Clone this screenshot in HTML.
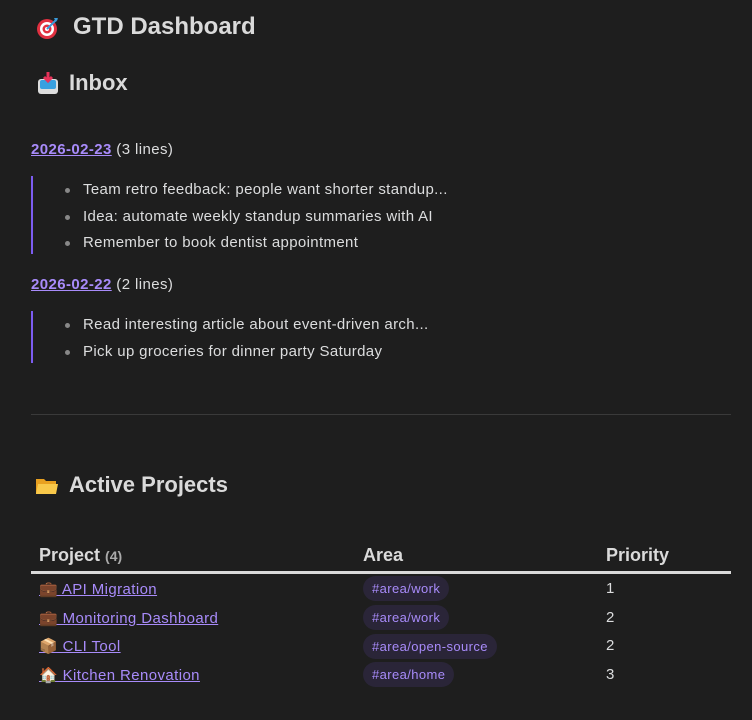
<!DOCTYPE html>
<html><head><meta charset="utf-8"><style>
body{margin:0;background:#1e1e1e;width:752px;height:720px;position:relative;font-family:"Liberation Sans",sans-serif;color:#dcddde;overflow:hidden}
.a{position:absolute;white-space:nowrap}
.t{font-weight:bold;color:#dadada}
a{color:#a88bfa;text-decoration:underline}
.q{border-left:2px solid #7c5cf0;position:absolute;left:31px}
.li{position:absolute;left:83px;font-size:15px;line-height:18px;letter-spacing:0.35px}
.li:before{content:"";position:absolute;left:-18px;top:7px;width:5px;height:5px;border-radius:50%;background:#888}
.tag{position:absolute;left:363px;background:#2a2538;color:#a88bfa;font-size:13px;padding:0 9px;height:25px;line-height:25px;border-radius:13px;letter-spacing:0.4px}
.r{font-size:15px;letter-spacing:0.4px}
</style></head><body>
<svg class="a" style="left:36px;top:16px" width="24" height="24" viewBox="0 0 24 24"><circle cx="11" cy="13" r="10" fill="#e03040"/><circle cx="11" cy="13" r="7" fill="#fff"/><circle cx="11" cy="13" r="4.5" fill="#e03040"/><circle cx="11" cy="13" r="2" fill="#fff"/><path d="M11 13L21 3" stroke="#3a9ad9" stroke-width="2"/><path d="M18 2l4 0-2 4z" fill="#3a9ad9"/></svg>
<div class="a t" style="left:73px;top:13px;font-size:24px">GTD Dashboard</div>
<svg class="a" style="left:37px;top:71px" width="22" height="24" viewBox="0 0 22 24"><rect x="1" y="8" width="20" height="15" rx="3" fill="#ddd"/><rect x="3" y="9" width="16" height="9" rx="2" fill="#39a0e0"/><path d="M11 1v8M7 6l4 4 4-4" stroke="#e8335a" stroke-width="3" fill="none"/></svg>
<div class="a t" style="left:69px;top:70px;font-size:22px">Inbox</div>
<div class="a" style="left:31px;top:141px;font-size:15px;letter-spacing:0.4px"><a style="font-weight:bold">2026-02-23</a> (3 lines)</div>
<div class="q" style="top:176px;height:78px"></div>
<div class="li" style="top:181px">Team retro feedback: people want shorter standup...</div>
<div class="li" style="top:208px">Idea: automate weekly standup summaries with AI</div>
<div class="li" style="top:234px">Remember to book dentist appointment</div>
<div class="a" style="left:31px;top:276px;font-size:15px;letter-spacing:0.4px"><a style="font-weight:bold">2026-02-22</a> (2 lines)</div>
<div class="q" style="top:311px;height:52px"></div>
<div class="li" style="top:316px">Read interesting article about event-driven arch...</div>
<div class="li" style="top:343px">Pick up groceries for dinner party Saturday</div>
<div class="a" style="left:31px;top:414px;width:700px;height:1px;background:#3a3a3a"></div>
<svg class="a" style="left:35px;top:476px" width="24" height="20" viewBox="0 0 24 20"><path d="M1 3h8l2 2h10v13H1z" fill="#e8a020"/><path d="M3 8h20l-2 10H1z" fill="#f8c84a"/></svg>
<div class="a t" style="left:69px;top:472px;font-size:22px">Active Projects</div>
<div class="a t" style="left:39px;top:545px;font-size:18px">Project <span style="font-size:14px;color:#aaa">(4)</span></div>
<div class="a t" style="left:363px;top:545px;font-size:18px">Area</div>
<div class="a t" style="left:606px;top:545px;font-size:18px">Priority</div>
<div class="a" style="left:31px;top:571px;width:700px;height:3px;background:#dadada"></div>
<div class="a r" style="left:39px;top:580px"><a>💼 API Migration</a></div>
<div class="a r" style="left:39px;top:609px"><a>💼 Monitoring Dashboard</a></div>
<div class="a r" style="left:39px;top:637px"><a>📦 CLI Tool</a></div>
<div class="a r" style="left:39px;top:666px"><a>🏠 Kitchen Renovation</a></div>
<div class="tag" style="top:576px">#area/work</div>
<div class="tag" style="top:605px">#area/work</div>
<div class="tag" style="top:634px">#area/open-source</div>
<div class="tag" style="top:662px">#area/home</div>
<div class="a r" style="left:606px;top:580px">1</div>
<div class="a r" style="left:606px;top:609px">2</div>
<div class="a r" style="left:606px;top:637px">2</div>
<div class="a r" style="left:606px;top:666px">3</div>
</body></html>
